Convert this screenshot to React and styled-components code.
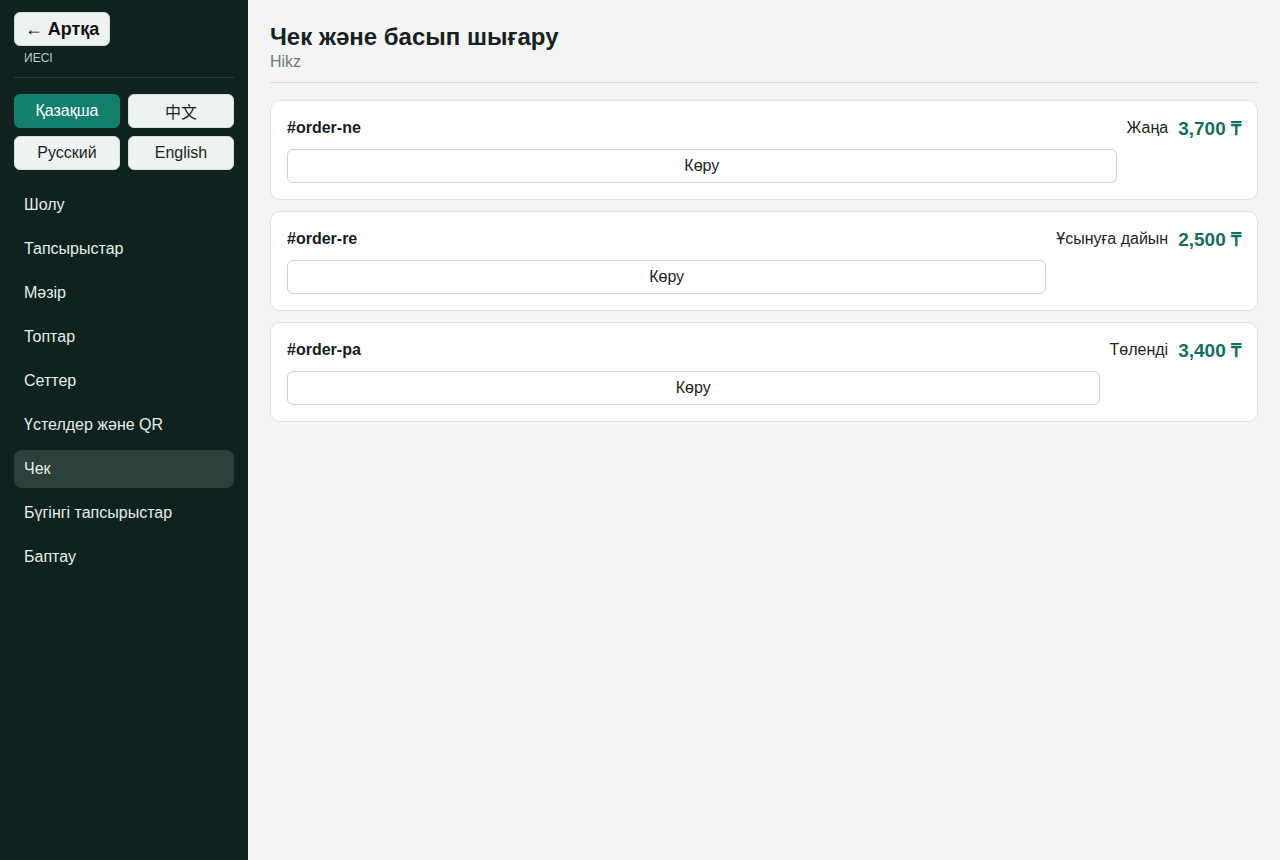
import React from "react";
import styled, { createGlobalStyle } from "styled-components";

const Global = createGlobalStyle`
  html, body { margin: 0; padding: 0; }
  body {
    font-family: "Liberation Sans", Arial, "Noto Sans CJK SC", sans-serif;
    background: #f3f5f4;
    color: #14201d;
  }
  * { box-sizing: border-box; }
`;

const Shell = styled.div`
  display: flex;
  min-height: 860px;
`;

const Sidebar = styled.aside`
  position: relative;
  width: 248px;
  flex: 0 0 248px;
  background: #10221f;
  padding: 14px;
  display: flex;
  flex-direction: column;
`;

const BackButton = styled.button`
  position: absolute;
  top: 12px;
  left: 14px;
  height: 34px;
  width: 96px;
  padding: 0 6px;
  border: 1px solid #d3ddd9;
  border-radius: 6px;
  background: #eef3f1;
  color: #111;
  font-family: inherit;
  font-size: 18px;
  font-weight: 700;
  white-space: nowrap;
  cursor: pointer;
`;

const Brand = styled.div`
  padding: 13px 10px 11px;
  border-bottom: 1px solid #2b3b38;
`;

const BrandTitle = styled.div`
  color: #fff;
  font-size: 18px;
  font-weight: 700;
  line-height: 24px;
`;

const BrandRole = styled.div`
  color: #b9cbc6;
  font-size: 12px;
  line-height: 15px;
`;

const LangGrid = styled.div`
  margin-top: 16px;
  display: grid;
  grid-template-columns: 1fr 1fr;
  gap: 8px;
`;

const LangButton = styled.button`
  height: 34px;
  border-radius: 6px;
  border: 1px solid ${(p) => (p.$active ? "#13806e" : "#d2ddd9")};
  background: ${(p) => (p.$active ? "#13806e" : "#edf3f0")};
  color: ${(p) => (p.$active ? "#ffffff" : "#1a2522")};
  font-family: inherit;
  font-size: 16px;
  cursor: pointer;
`;

const Nav = styled.nav`
  margin-top: 16px;
  display: flex;
  flex-direction: column;
  gap: 6px;
`;

const NavItem = styled.a`
  display: flex;
  align-items: center;
  height: 38px;
  padding: 0 10px;
  border-radius: 8px;
  color: #e4eeeb;
  font-size: 16px;
  text-decoration: none;
  background: ${(p) => (p.$active ? "#2d3e3b" : "transparent")};
  cursor: pointer;
`;

const Main = styled.main`
  flex: 1;
  padding: 23px 22px;
`;

const Header = styled.header`
  padding-bottom: 10px;
  border-bottom: 1px solid #d8dfdd;
  margin-bottom: 17px;
`;

const Title = styled.h1`
  margin: 0;
  font-size: 24px;
  line-height: 28px;
  font-weight: 700;
  color: #17211f;
`;

const Subtitle = styled.div`
  margin-top: 1px;
  font-size: 16px;
  line-height: 20px;
  color: #6d7a77;
`;

const List = styled.div`
  display: flex;
  flex-direction: column;
  gap: 11px;
`;

const Card = styled.div`
  background: #fff;
  border: 1px solid #dde3e1;
  border-radius: 10px;
  padding: 16px;
  display: flex;
  gap: 10px;
  align-items: flex-start;
`;

const CardLeft = styled.div`
  flex: 1;
  display: flex;
  flex-direction: column;
  gap: 10px;
`;

const OrderId = styled.div`
  font-size: 16px;
  font-weight: 700;
  line-height: 22px;
  color: #16201e;
`;

const ViewButton = styled.button`
  height: 34px;
  width: 100%;
  border: 1px solid #c9d6d3;
  border-radius: 6px;
  background: #fff;
  font-family: inherit;
  font-size: 16px;
  color: #1b2623;
  cursor: pointer;
`;

const CardRight = styled.div`
  display: flex;
  align-items: center;
  gap: 10px;
  height: 22px;
`;

const Status = styled.span`
  font-size: 16px;
  color: #1d2623;
`;

const Price = styled.span`
  font-size: 19px;
  font-weight: 700;
  color: #13705f;
`;

const langs = [
  { label: "Қазақша", active: true },
  { label: "中文" },
  { label: "Русский" },
  { label: "English" },
];

const nav = [
  "Шолу",
  "Тапсырыстар",
  "Мәзір",
  "Топтар",
  "Сеттер",
  "Үстелдер және QR",
  "Чек",
  "Бүгінгі тапсырыстар",
  "Баптау",
];

const orders = [
  { id: "#order-ne", status: "Жаңа", price: "3,700 ₸" },
  { id: "#order-re", status: "Ұсынуға дайын", price: "2,500 ₸" },
  { id: "#order-pa", status: "Төленді", price: "3,400 ₸" },
];

export default function App() {
  return (
    <>
      <Global />
      <Shell>
        <Sidebar>
          <Brand>
            <BrandTitle>Hikz</BrandTitle>
            <BrandRole>ИЕСІ</BrandRole>
          </Brand>
          <BackButton>← Артқа</BackButton>
          <LangGrid>
            {langs.map((l) => (
              <LangButton key={l.label} $active={l.active}>
                {l.label}
              </LangButton>
            ))}
          </LangGrid>
          <Nav>
            {nav.map((n) => (
              <NavItem key={n} $active={n === "Чек"}>
                {n}
              </NavItem>
            ))}
          </Nav>
        </Sidebar>
        <Main>
          <Header>
            <Title>Чек және басып шығару</Title>
            <Subtitle>Hikz</Subtitle>
          </Header>
          <List>
            {orders.map((o) => (
              <Card key={o.id}>
                <CardLeft>
                  <OrderId>{o.id}</OrderId>
                  <ViewButton>Көру</ViewButton>
                </CardLeft>
                <CardRight>
                  <Status>{o.status}</Status>
                  <Price>{o.price}</Price>
                </CardRight>
              </Card>
            ))}
          </List>
        </Main>
      </Shell>
    </>
  );
}
